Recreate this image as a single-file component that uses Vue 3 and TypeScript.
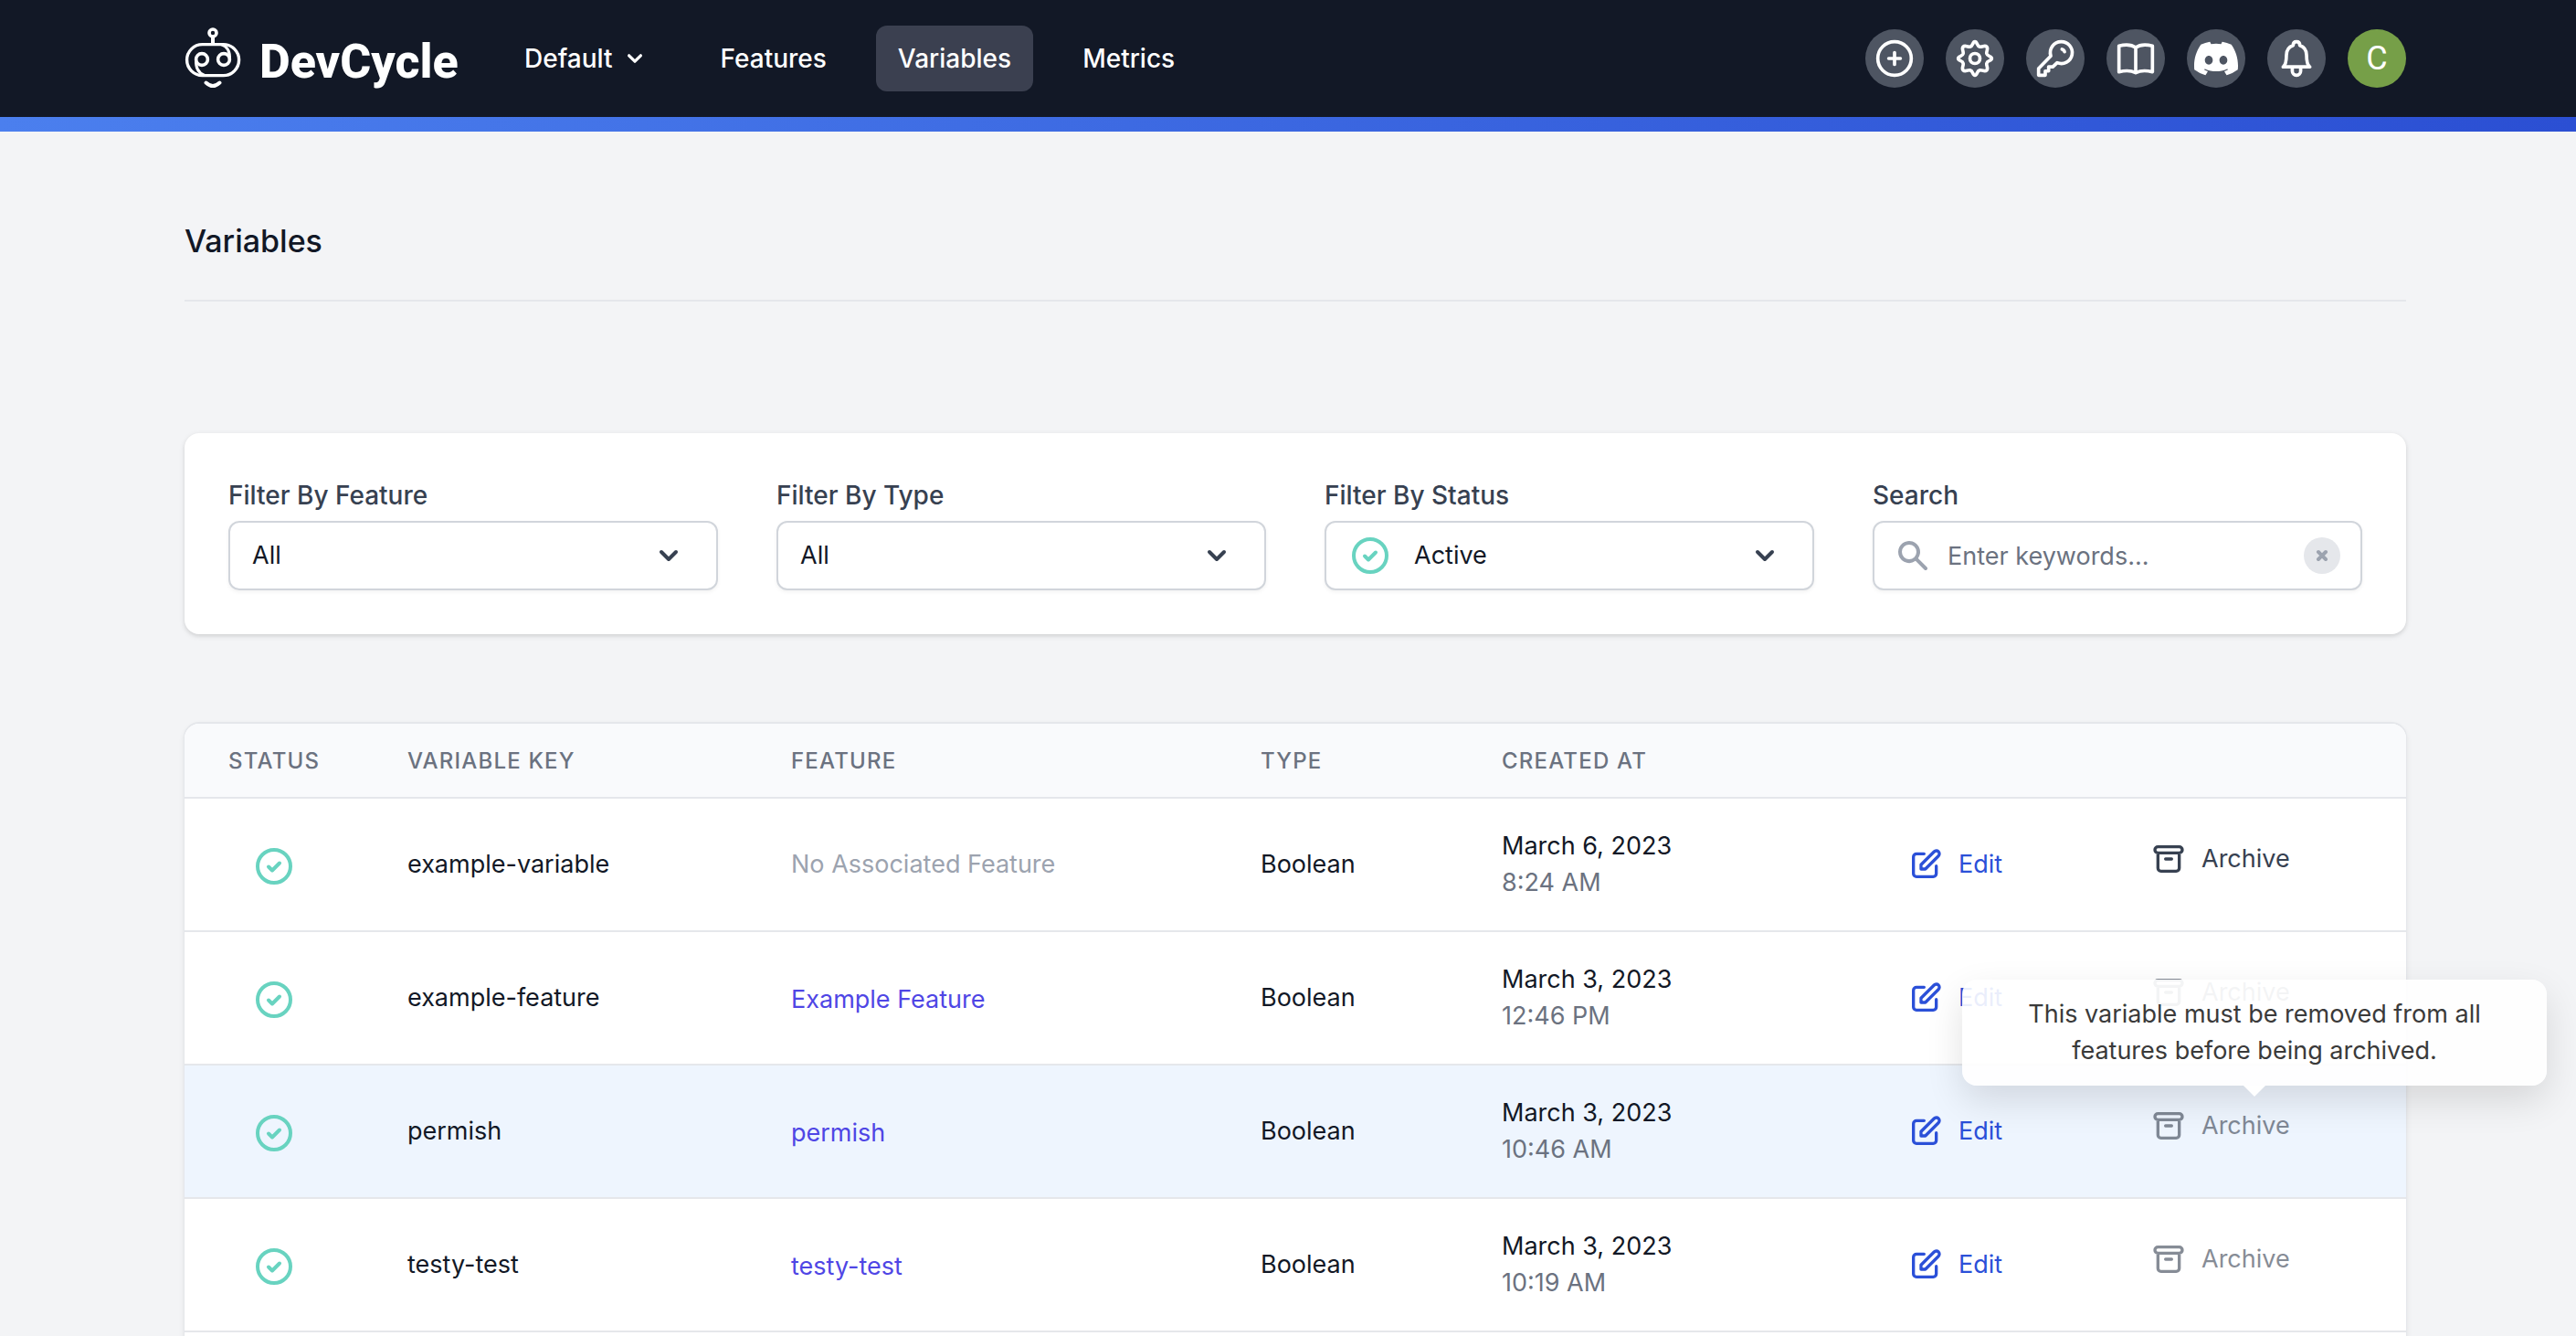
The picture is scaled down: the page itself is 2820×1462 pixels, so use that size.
<script setup lang="ts">
import { ref } from 'vue'

interface Variable {
  key: string
  feature: string | null
  type: string
  date: string
  time: string
  hovered?: boolean
}

const variables: Variable[] = [
  { key: 'example-variable', feature: null, type: 'Boolean', date: 'March 6, 2023', time: '8:24 AM' },
  { key: 'example-feature', feature: 'Example Feature', type: 'Boolean', date: 'March 3, 2023', time: '12:46 PM' },
  { key: 'permish', feature: 'permish', type: 'Boolean', date: 'March 3, 2023', time: '10:46 AM', hovered: true },
  { key: 'testy-test', feature: 'testy-test', type: 'Boolean', date: 'March 3, 2023', time: '10:19 AM' },
]

const featureFilter = ref('All')
const typeFilter = ref('All')
const statusFilter = ref('Active')
const search = ref('')
</script>

<template>
  <div class="app">
    <header class="topbar">
      <div class="container topbar-inner">
        <a class="logo" href="#" aria-label="DevCycle home">
          <svg class="logo-mark" viewBox="0 0 62 68" fill="none" stroke="#fff" stroke-linecap="round">
            <circle cx="31" cy="6" r="4" stroke-width="3.6" />
            <path d="M31 11v7" stroke-width="4" stroke-linecap="butt" />
            <rect x="2.6" y="18.6" width="57" height="34" rx="17" stroke-width="3.4" />
            <circle cx="19" cy="35" r="6.4" stroke-width="3.6" />
            <circle cx="43" cy="35" r="6.4" stroke-width="3.6" />
            <path d="M12.6 35C12 44 15 50 22 52.500" stroke-width="3" />
            <path d="M49.400 35C50 27 48 21 40 18.600" stroke-width="3" />
            <path d="M23.500 60.500q7.500 7 15 0" stroke-width="4" />
          </svg>
          <span class="logo-name">DevCycle</span>
        </a>
        <nav class="nav">
          <button class="nav-item" type="button">
            Default
            <svg class="nav-caret" viewBox="0 0 20 20" fill="none" stroke="currentColor" stroke-width="2" stroke-linecap="round" stroke-linejoin="round"><path d="M6 8l4 4 4-4" /></svg>
          </button>
          <a class="nav-item" href="#">Features</a>
          <a class="nav-item active" href="#">Variables</a>
          <a class="nav-item" href="#">Metrics</a>
        </nav>
        <div class="actions">
          <button class="round" type="button" aria-label="Create">
            <svg viewBox="0 0 24 24"><circle cx="12" cy="12" r="10" /><path d="M8.500 12h7M12 8.500v7" /></svg>
          </button>
          <button class="round" type="button" aria-label="Settings">
            <svg viewBox="0 0 24 24"><circle cx="12" cy="12" r="3" /><path d="M12 2C13.500 2 13 4.600 14.900 5C16.500 5.300 17.800 3.800 19 5C20.200 6.200 18.700 7.500 19 9.100C19.400 11 22 10.500 22 12C22 13.500 19.400 13 19 14.900C18.700 16.500 20.200 17.800 19 19C17.800 20.200 16.500 18.700 14.900 19C13 19.400 13.500 22 12 22C10.500 22 11 19.400 9.100 19C7.500 18.700 6.200 20.200 5 19C3.800 17.800 5.300 16.500 5 14.900C4.600 13 2 13.500 2 12C2 10.500 4.600 11 5 9.100C5.300 7.500 3.800 6.200 5 5C6.200 3.800 7.500 5.300 9.100 5C11 4.600 10.500 2 12 2Z" /></svg>
          </button>
          <button class="round" type="button" aria-label="API keys">
            <svg viewBox="0 0 24 24"><path d="M15.500 2a6.500 6.500 0 0 0-6.200 8.500L2 18v4h4v-2.500h2V17h2.500l2.600-2.500A6.500 6.500 0 1 0 15.500 2z" /><path d="M16 6.500a2 2 0 0 1 1.500 1.500" /></svg>
          </button>
          <button class="round" type="button" aria-label="Documentation">
            <svg viewBox="0 0 24 24"><path d="M12 5.500C10 4 6 3.500 2 4.500v15.500c4-1 8-.5 10 .5 2-1 6-1.500 10-.5V4.500c-4-1-8-.5-10 1zM12 5.500v15" /></svg>
          </button>
          <button class="round" type="button" aria-label="Discord">
            <svg class="discord" viewBox="0 0 24 24"><path d="M20.317 4.370a19.791 19.791 0 0 0-4.885-1.515.074.074 0 0 0-.079.037c-.21.375-.444.864-.608 1.250a18.270 18.270 0 0 0-5.487 0 12.640 12.640 0 0 0-.617-1.250.077.077 0 0 0-.079-.037A19.736 19.736 0 0 0 3.677 4.370a.07.07 0 0 0-.032.027C.533 9.046-.32 13.580.099 18.057a.082.082 0 0 0 .031.057 19.900 19.900 0 0 0 5.993 3.030.078.078 0 0 0 .084-.028 14.090 14.090 0 0 0 1.226-1.994.076.076 0 0 0-.041-.106 13.107 13.107 0 0 1-1.872-.892.077.077 0 0 1-.008-.128 10.200 10.200 0 0 0 .372-.292.074.074 0 0 1 .077-.010c3.928 1.793 8.180 1.793 12.062 0a.074.074 0 0 1 .078.010c.12.098.246.198.373.292a.077.077 0 0 1-.006.127 12.299 12.299 0 0 1-1.873.892.077.077 0 0 0-.041.107c.36.698.772 1.362 1.225 1.993a.076.076 0 0 0 .084.028 19.839 19.839 0 0 0 6.002-3.030.077.077 0 0 0 .032-.054c.5-5.177-.838-9.674-3.549-13.660a.061.061 0 0 0-.031-.030zM8.020 15.330c-1.183 0-2.157-1.085-2.157-2.419 0-1.333.956-2.419 2.157-2.419 1.210 0 2.176 1.096 2.157 2.420 0 1.333-.956 2.418-2.157 2.418zm7.975 0c-1.183 0-2.157-1.085-2.157-2.419 0-1.333.955-2.419 2.157-2.419 1.210 0 2.176 1.096 2.157 2.420 0 1.333-.946 2.418-2.157 2.418z" /></svg>
          </button>
          <button class="round" type="button" aria-label="Notifications">
            <svg viewBox="0 0 24 24"><path d="M4 17c1.500-1 2-3 2-7 0-3 1.500-5 4-5.800C10 2.800 10.800 2 12 2s2 .8 2 2.200c2.500.8 4 2.800 4 5.800 0 4 .5 6 2 7zM9.500 17v2.500a2.500 2.500 0 0 0 5 0V17" /></svg>
          </button>
          <button class="avatar" type="button" aria-label="Account">C</button>
        </div>
      </div>
    </header>
    <div class="stripe"></div>

    <main class="container main">
      <h1 class="title">Variables</h1>

      <section class="filters">
        <div class="field">
          <label for="filter-feature">Filter By Feature</label>
          <div class="control">
            <select id="filter-feature" v-model="featureFilter"><option>All</option></select>
            <svg class="caret" viewBox="0 0 20 20"><path d="M6 8l4 4 4-4" /></svg>
          </div>
        </div>
        <div class="field">
          <label for="filter-type">Filter By Type</label>
          <div class="control">
            <select id="filter-type" v-model="typeFilter"><option>All</option></select>
            <svg class="caret" viewBox="0 0 20 20"><path d="M6 8l4 4 4-4" /></svg>
          </div>
        </div>
        <div class="field">
          <label for="filter-status">Filter By Status</label>
          <div class="control">
            <select id="filter-status" v-model="statusFilter" class="with-status"><option>Active</option></select>
            <svg class="check lead-status" viewBox="0 0 40 40"><circle cx="20" cy="20" r="18" /><path d="M14 20.500l4 4 8-8" /></svg>
            <svg class="caret" viewBox="0 0 20 20"><path d="M6 8l4 4 4-4" /></svg>
          </div>
        </div>
        <div class="field">
          <label for="search">Search</label>
          <div class="control">
            <input id="search" v-model="search" type="text" placeholder="Enter keywords..." />
            <svg class="magnifier" viewBox="0 0 20 20"><path fill-rule="evenodd" d="M8 4a4 4 0 100 8 4 4 0 000-8zM2 8a6 6 0 1110.890 3.476l4.817 4.817a1 1 0 01-1.414 1.414l-4.816-4.816A6 6 0 012 8z" /></svg>
            <button class="clear" type="button" aria-label="Clear search">
              <svg viewBox="0 0 40 40"><path d="M16 16l8 8M24 16l-8 8" /></svg>
            </button>
          </div>
        </div>
      </section>

      <table class="table">
        <colgroup>
          <col class="c-status" /><col class="c-key" /><col class="c-feature" /><col class="c-type" />
          <col class="c-created" /><col class="c-edit" /><col class="c-archive" />
        </colgroup>
        <thead>
          <tr>
            <th scope="col">STATUS</th>
            <th scope="col">VARIABLE KEY</th>
            <th scope="col">FEATURE</th>
            <th scope="col">TYPE</th>
            <th scope="col">CREATED AT</th>
            <td></td>
            <td></td>
          </tr>
        </thead>
        <tbody>
          <tr v-for="v in variables" :key="v.key" :class="{ hovered: v.hovered }">
            <td>
              <svg class="check row-status" viewBox="0 0 40 40"><circle cx="20" cy="20" r="18" /><path d="M14 20.500l4 4 8-8" /></svg>
            </td>
            <td>{{ v.key }}</td>
            <td>
              <a v-if="v.feature" class="feature" href="#">{{ v.feature }}</a>
              <span v-else class="none">No Associated Feature</span>
            </td>
            <td>{{ v.type }}</td>
            <td>
              <div>{{ v.date }}</div>
              <div class="time">{{ v.time }}</div>
            </td>
            <td>
              <a class="edit" href="#">
                <svg viewBox="0 0 24 24"><path d="M11 5H6a2 2 0 00-2 2v11a2 2 0 002 2h11a2 2 0 002-2v-5m-1.414-9.414a2 2 0 112.828 2.828L11.828 15H9v-2.828l8.586-8.586z" /></svg>
                Edit
              </a>
            </td>
            <td>
              <div class="archive-wrap">
                <button class="archive" type="button" :disabled="!!v.feature">
                  <svg viewBox="0 0 24 24"><path d="M5 8h14M5 8a2 2 0 110-4h14a2 2 0 110 4M5 8v10a2 2 0 002 2h10a2 2 0 002-2V8m-9 4h4" /></svg>
                  Archive
                </button>
                <div v-if="v.hovered" class="tooltip" role="tooltip">This variable must be removed from all features before being archived.</div>
              </div>
            </td>
          </tr>
          <tr class="pending"><td colspan="7"></td></tr>
        </tbody>
      </table>
    </main>
  </div>
</template>

<style>
body {
  margin: 0;
  background: #f3f4f6;
}
</style>

<style scoped>
* {
  box-sizing: border-box;
}
.app {
  height: 100vh;
  overflow: hidden;
  font-family: Inter, "Liberation Sans", sans-serif;
  font-size: 27px;
  line-height: 40px;
  color: #121826;
  background: #f3f4f6;
}
button,
select,
input {
  font: inherit;
  color: inherit;
  border: 0;
  margin: 0;
  background: none;
}
button {
  padding: 0;
  cursor: pointer;
}
a {
  color: inherit;
  text-decoration: none;
}
.container {
  width: calc(100% - 372px);
  max-width: 2432px;
  margin: 0 auto;
  position: relative;
  left: 8px;
}
.topbar {
  background: #121826;
  color: #fff;
}
.topbar-inner {
  display: flex;
  align-items: center;
  height: 128px;
}
.logo {
  display: flex;
  align-items: center;
  gap: 20px;
  width: 348px;
}
.logo-mark {
  width: 62px;
  height: 68px;
}
.logo-name {
  padding-top: 8px;
  font-family: Roboto, "Liberation Sans", sans-serif;
  font-size: 52px;
  font-weight: 800;
  line-height: 60px;
}
.nav {
  display: flex;
  gap: 30px;
}
.nav-item {
  display: flex;
  align-items: center;
  gap: 8px;
  padding: 16px 24px;
  border-radius: 12px;
  font-size: 28px;
  font-weight: 500;
}
.nav-item.active {
  background: #3b4050;
}
.nav-caret {
  width: 32px;
  height: 32px;
}
.actions {
  display: flex;
  gap: 24px;
  margin-left: auto;
}
.round,
.avatar {
  display: flex;
  align-items: center;
  justify-content: center;
  width: 64px;
  height: 64px;
  border-radius: 50%;
  background: #4e5562;
}
.round svg {
  width: 44px;
  height: 44px;
  fill: none;
  stroke: #fff;
  stroke-width: 2;
  stroke-linecap: round;
  stroke-linejoin: round;
}
.round svg.discord {
  width: 48px;
  height: 48px;
  fill: #fff;
  stroke: none;
}
.avatar {
  background: #769f48;
  font-family: Roboto, "Liberation Sans", sans-serif;
  font-size: 36px;
}
.stripe {
  height: 16px;
  background: linear-gradient(90deg, #4b7fee, #2b4fd3);
}
.title {
  margin: 0;
  padding: 94px 0 38px;
  border-bottom: 2px solid #e5e7eb;
  font-size: 34px;
  line-height: 52px;
  font-weight: 500;
}
.filters {
  display: grid;
  grid-template-columns: repeat(4, 1fr);
  gap: 64px;
  margin-top: 144px;
  padding: 48px;
  background: #fff;
  border-radius: 16px;
  box-shadow: 0 2px 6px rgba(0, 0, 0, 0.1), 0 2px 4px rgba(0, 0, 0, 0.06);
}
.field label {
  display: block;
  margin-bottom: 8px;
  font-size: 28px;
  font-weight: 500;
  color: #374151;
}
.control {
  display: grid;
  align-items: center;
  height: 76px;
  border: 2px solid #d1d5db;
  border-radius: 12px;
  background: #fff;
  box-shadow: 0 2px 4px rgba(0, 0, 0, 0.05);
}
.control > * {
  grid-area: 1 / 1;
}
.control select,
.control input {
  appearance: none;
  width: 100%;
  height: 72px;
  padding: 0 24px;
  outline: none;
}
.control select.with-status {
  padding-left: 96px;
}
.control input {
  padding: 0 72px 0 80px;
}
.control input::placeholder {
  color: #6b7280;
  opacity: 1;
}
.caret {
  justify-self: end;
  width: 40px;
  height: 40px;
  margin-right: 32px;
  fill: none;
  stroke: #374151;
  stroke-width: 2;
  stroke-linecap: round;
  stroke-linejoin: round;
  pointer-events: none;
}
.check {
  display: block;
  width: 40px;
  height: 40px;
  fill: none;
  stroke: #68d3c0;
  stroke-width: 4;
  stroke-linecap: round;
  stroke-linejoin: round;
}
.lead-status {
  margin-left: 28px;
  pointer-events: none;
}
.magnifier {
  width: 40px;
  height: 40px;
  margin-left: 22px;
  fill: #9ca3af;
}
.clear {
  justify-self: end;
  width: 40px;
  height: 40px;
  margin-right: 22px;
  border-radius: 50%;
  background: #e5e7eb;
}
.clear svg {
  display: block;
  width: 40px;
  height: 40px;
  stroke: #9ca3af;
  stroke-width: 4;
  stroke-linecap: round;
}
.table {
  width: 100%;
  margin-top: 98px;
  table-layout: fixed;
  border-collapse: separate;
  border-spacing: 0;
  background: #fff;
  border-radius: 16px;
  box-shadow: 0 -1px 0 1px #e5e7eb, 0 2px 6px rgba(0, 0, 0, 0.1);
}
.c-status { width: 196px; }
.c-key { width: 420px; }
.c-feature { width: 514px; }
.c-type { width: 264px; }
.c-created { width: 444px; }
.c-edit { width: 262px; }
.c-archive { width: 332px; }
thead th,
thead td {
  height: 82px;
  padding: 2px 48px 0;
  background: #f9fafc;
  border-bottom: 2px solid #e5e7eb;
  text-align: left;
  font-size: 24px;
  line-height: 32px;
  font-weight: 500;
  letter-spacing: 0.05em;
  color: #6b7280;
  white-space: nowrap;
}
thead tr > :first-child {
  border-top-left-radius: 16px;
}
thead tr > :last-child {
  border-top-right-radius: 16px;
}
tbody td {
  height: 146px;
  padding: 0 48px;
  border-bottom: 2px solid #e5e7eb;
  vertical-align: middle;
}
.hovered td {
  background: #eef5fe;
}
.row-status {
  margin: 4px auto 0;
}
.feature {
  display: block;
  padding-top: 4px;
  color: #4f46e5;
}
.none {
  color: #9ca3af;
}
.time {
  color: #6b7280;
}
.edit,
.archive {
  display: flex;
  align-items: center;
  gap: 16px;
}
.edit {
  color: #2b50d8;
}
.edit svg,
.archive svg {
  width: 40px;
  height: 40px;
  fill: none;
  stroke: currentColor;
  stroke-width: 2;
  stroke-linecap: round;
  stroke-linejoin: round;
}
.archive-wrap {
  position: relative;
  padding: 0 0 12px 4px;
}
.archive {
  color: #374151;
}
.archive:disabled {
  opacity: 0.6;
  cursor: not-allowed;
}
.tooltip {
  position: absolute;
  left: 50%;
  bottom: 76px;
  width: 640px;
  margin-left: -320px;
  padding: 18px 60px;
  border-radius: 16px;
  background: rgba(255, 255, 255, 0.9);
  box-shadow: 0 16px 40px rgba(0, 0, 0, 0.12);
  text-align: center;
  color: #3a3a3a;
}
.tooltip::after {
  content: "";
  position: absolute;
  top: 100%;
  left: 50%;
  margin-left: -12px;
  border: 12px solid transparent;
  border-top-color: #fff;
  border-bottom: 0;
}
</style>
